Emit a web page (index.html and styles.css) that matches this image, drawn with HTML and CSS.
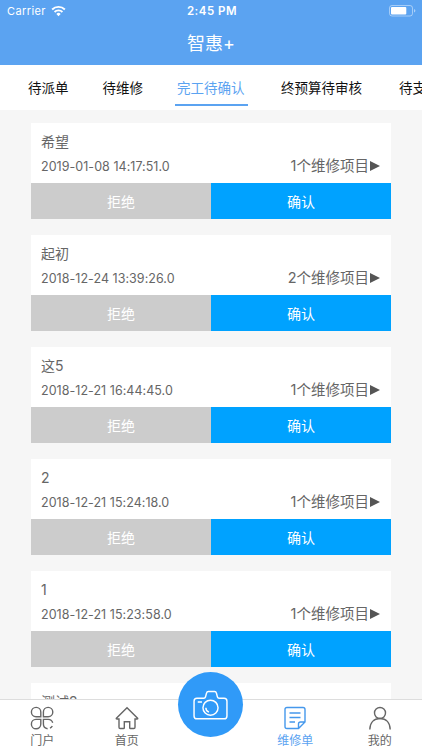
FILE: index.html
```
<!DOCTYPE html>
<html lang="zh-CN">
<head>
    <meta charset="UTF-8">
    <meta name="viewport" content="width=device-width, initial-scale=1">
    <title>智惠+</title>
    <link rel="stylesheet" href="styles.css">
</head>
<body>
    <header class="header">
        <div class="status-bar">
            <div class="carrier">
                <span>Carrier</span>
                <svg class="wifi" viewBox="0 0 16 12" fill="none" stroke="#fff" stroke-width="2">
                    <path d="M1.2 4.4a9.6 9.6 0 0 1 13.6 0"/>
                    <path d="M3.8 7.1a5.9 5.9 0 0 1 8.4 0"/>
                    <path d="M8 11.5 5.7 9.1a3.3 3.3 0 0 1 4.6 0z" fill="#fff" stroke="none"/>
                </svg>
            </div>
            <span class="clock">2:45 PM</span>
            <svg class="battery" viewBox="0 0 27 12">
                <rect x=".5" y=".5" width="23" height="10.5" rx="2.5" fill="none" stroke="#fff" stroke-opacity=".45"/>
                <rect x="2" y="2" width="15.3" height="7.5" rx="1" fill="#fff"/>
                <path d="M25 4v3.6q1.4-.6 1.4-1.8T25 4z" fill="#fff" fill-opacity=".5"/>
            </svg>
        </div>
        <h1 class="title">智惠+</h1>
    </header>

    <nav class="tabs">
        <span class="tab">待派单</span>
        <span class="tab">待维修</span>
        <span class="tab active">完工待确认</span>
        <span class="tab">终预算待审核</span>
        <span class="tab">待支付</span>
    </nav>

    <main class="list">
        <div class="card">
            <div class="card-info">
                <p class="name">希望</p>
                <div class="row"><span class="date">2019-01-08 14:17:51.0</span><span class="count">1个维修项目<i class="arrow"></i></span></div>
            </div>
            <div class="actions"><button class="btn reject">拒绝</button><button class="btn confirm">确认</button></div>
        </div>
        <div class="card">
            <div class="card-info">
                <p class="name">起初</p>
                <div class="row"><span class="date">2018-12-24 13:39:26.0</span><span class="count">2个维修项目<i class="arrow"></i></span></div>
            </div>
            <div class="actions"><button class="btn reject">拒绝</button><button class="btn confirm">确认</button></div>
        </div>
        <div class="card">
            <div class="card-info">
                <p class="name">这5</p>
                <div class="row"><span class="date">2018-12-21 16:44:45.0</span><span class="count">1个维修项目<i class="arrow"></i></span></div>
            </div>
            <div class="actions"><button class="btn reject">拒绝</button><button class="btn confirm">确认</button></div>
        </div>
        <div class="card">
            <div class="card-info">
                <p class="name">2</p>
                <div class="row"><span class="date">2018-12-21 15:24:18.0</span><span class="count">1个维修项目<i class="arrow"></i></span></div>
            </div>
            <div class="actions"><button class="btn reject">拒绝</button><button class="btn confirm">确认</button></div>
        </div>
        <div class="card">
            <div class="card-info">
                <p class="name">1</p>
                <div class="row"><span class="date">2018-12-21 15:23:58.0</span><span class="count">1个维修项目<i class="arrow"></i></span></div>
            </div>
            <div class="actions"><button class="btn reject">拒绝</button><button class="btn confirm">确认</button></div>
        </div>
        <div class="card">
            <div class="card-info">
                <p class="name">测试2</p>
            </div>
        </div>
    </main>

    <footer class="tab-bar">
        <a class="nav-item">
            <svg class="nav-icon" viewBox="0 0 24 24">
                <path d="M10.8 10.8H6a4.7 4.7 0 1 1 4.8-4.7z"/>
                <path d="M13.4 10.8h4.8a4.7 4.7 0 1 0-4.8-4.7z"/>
                <path d="M10.8 13.4H6a4.7 4.7 0 1 0 4.8 4.7z"/>
                <path d="M22.7 16.7a4.7 4.7 0 0 0-4.5-3.3h-4.8v4.7a4.7 4.7 0 0 0 4.2 4.7M20 22.2a5 5 0 0 0 2.3-2.2"/>
            </svg>
            <span>门户</span>
        </a>
        <a class="nav-item">
            <svg class="nav-icon" viewBox="0 0 24 24">
                <path d="M12 1.7 1.4 12.2q-.5.8.6.8h2v8.3q0 1.2 1.2 1.2h3.3q.8 0 .8-.8v-6h5.4v6q0 .8.8.8h3.3q1.2 0 1.2-1.2V13h2q1.1 0 .6-.8z"/>
            </svg>
            <span>首页</span>
        </a>
        <a class="camera">
            <svg class="camera-icon" viewBox="0 0 36 31">
                <path d="M4 8.5h7.2q1.2 0 1.6-1.2l1-3.8q.5-2 2-2h6.4q1.5 0 2 2l1 3.8q.4 1.2 1.6 1.2H32q3 0 3 3v15.3q0 3-3 3H4q-3 0-3-3V11.5q0-3 3-3z"/>
                <circle cx="18" cy="18.3" r="7.8"/>
                <path d="M13.2 18.3a4.8 4.8 0 0 0 3.2 4.5M4.8 12.3h4.4"/>
            </svg>
        </a>
        <a class="nav-item current">
            <svg class="nav-icon" viewBox="0 0 24 24">
                <path d="M15.5 22.5H4q-2 0-2-2V3.5q0-2 2-2h16q2 0 2 2V16zM15.5 22.5V18q0-2 2-2H22M6.5 7h11M6.5 11.5h11M6.5 16H12"/>
            </svg>
            <span>维修单</span>
        </a>
        <a class="nav-item">
            <svg class="nav-icon" viewBox="0 0 24 24">
                <circle cx="12" cy="7" r="5.5"/>
                <path d="M1.8 23.5c.2-6.7 4-11 10.2-11s10 4.3 10.2 11"/>
            </svg>
            <span>我的</span>
        </a>
    </footer>
</body>
</html>
```
FILE: styles.css
```
* {
    margin: 0;
    padding: 0;
    box-sizing: border-box;
}
body {
    display: flex;
    flex-direction: column;
    height: 750px;
    overflow: hidden;
    background-color: #f6f6f6;
    font-family: Inter, "Noto Sans CJK SC", sans-serif;
    color: #666;
}

/* header */
.header {
    flex: none;
    height: 65px;
    background-color: #5ba3f1;
    color: white;
}
.status-bar {
    display: grid;
    grid-template-columns: 1fr auto 1fr;
    align-items: center;
    height: 22px;
    padding: 0 6px 0 7px;
    font-size: 11px;
    line-height: 22px;
}
.carrier {
    display: flex;
    align-items: center;
    gap: 5px;
    letter-spacing: 0.4px;
}
.wifi {
    width: 15px;
    height: 12px;
}
.clock {
    padding-left: 1px;
    font-weight: 600;
    font-size: 11.5px;
    letter-spacing: 0.5px;
}
.battery {
    width: 27px;
    height: 12px;
    justify-self: end;
}
.title {
    font-size: 18px;
    font-weight: 400;
    line-height: 43px;
    text-align: center;
}

/* tabs */
.tabs {
    flex: none;
    display: flex;
    height: 45px;
    padding-left: 26px;
    gap: 30px;
    background-color: white;
    overflow: hidden;
    white-space: nowrap;
}
.tab {
    flex: none;
    height: 41px;
    padding: 0 2px;
    font-size: 13.5px;
    line-height: 46px;
    color: #111;
}
.tab.active {
    padding: 0 3px 0 2px;
    margin-right: 1.5px;
    color: #5ba3f1;
    border-bottom: 2px solid #5ba3f1;
}
.tab:nth-child(4) {
    margin-right: 3px;
}

/* order list */
.list {
    flex: 1;
    min-height: 0;
    padding: 13px 31px 0;
    overflow: hidden;
}
.card {
    height: 96px;
    margin-bottom: 16px;
    background-color: white;
}
.card-info {
    height: 60px;
    padding: 8px 11px 0 10px;
}
.name {
    font-size: 14px;
    line-height: 22px;
}
.row {
    display: flex;
    justify-content: space-between;
    align-items: center;
    height: 26px;
}
.date {
    padding-top: 1px;
    font-size: 12.5px;
    letter-spacing: 0.04px;
}
.count {
    display: flex;
    align-items: center;
    font-size: 14.5px;
    line-height: 20px;
}
.arrow {
    margin-left: 1px;
    border-left: 10px solid #555;
    border-top: 5px solid transparent;
    border-bottom: 5px solid transparent;
}
.actions {
    display: flex;
    height: 36px;
}
.btn {
    flex: 1;
    border: none;
    font-family: inherit;
    font-size: 14px;
    color: white;
}
.reject {
    background-color: #ccc;
}
.confirm {
    background-color: #00a2ff;
}

/* bottom bar */
.tab-bar {
    flex: none;
    display: flex;
    height: 51px;
    background-color: white;
    border-top: 1px solid #ddd;
}
.nav-item {
    flex: 1;
    display: flex;
    flex-direction: column;
    align-items: center;
    padding-top: 6px;
    font-size: 12px;
    line-height: 20px;
}
.nav-icon {
    flex: none;
    width: 24px;
    height: 24px;
    margin-bottom: 1px;
    fill: none;
    stroke: #666;
    stroke-width: 1.4;
}
.current {
    color: #5ba3f1;
}
.current .nav-icon {
    stroke: #4598ec;
}
.camera {
    flex: none;
    display: flex;
    align-items: center;
    justify-content: center;
    width: 65px;
    height: 65px;
    margin: -28px 10px 0 9px;
    border-radius: 50%;
    background-color: #309af8;
    z-index: 1;
}
.camera-icon {
    width: 35px;
    height: 30px;
    fill: none;
    stroke: white;
    stroke-width: 1.5;
}
```
